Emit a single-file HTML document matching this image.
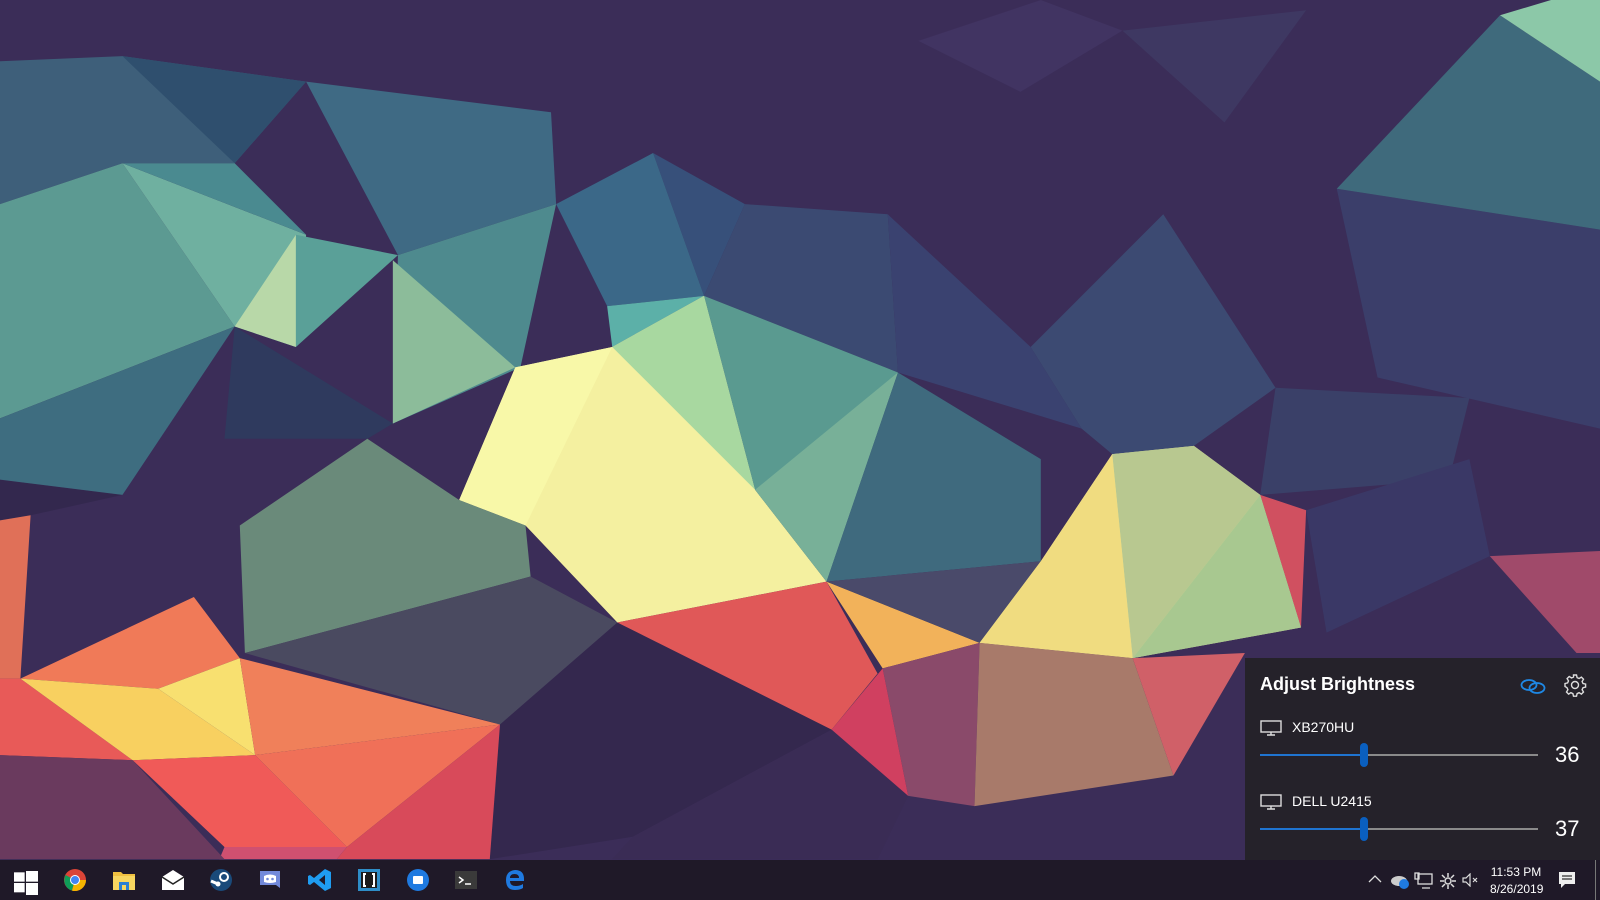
<!DOCTYPE html>
<html><head><meta charset="utf-8"><style>
html,body{margin:0;padding:0;width:1600px;height:900px;overflow:hidden;background:#3b2d58;font-family:"Liberation Sans",sans-serif}
#bg{position:absolute;left:0;top:0;width:1600px;height:900px}
#tb{position:absolute;left:0;top:860px;width:1600px;height:40px;background:rgba(30,25,38,0.96)}
.ic{position:absolute;top:8px;width:24px;height:24px}
#fly{position:absolute;left:1245px;top:658px;width:355px;height:202px;background:rgba(36,34,40,0.95);color:#fff}
.t{position:absolute;white-space:nowrap}
.track{position:absolute;left:15px;width:278px;height:2px;background:#8a8a8a}
.fill{position:absolute;left:0;top:0;height:2px;width:104px;background:#1f74d0}
.thumb{position:absolute;left:100px;top:-11px;width:8px;height:24px;border-radius:4px;background:#0a5fbf}
</style></head><body>
<svg id="bg" viewBox="0 0 1568 882" preserveAspectRatio="none">
<rect width="1568" height="882" fill="#3b2d58"/>
<polygon points="640,150 730,200 690,290" fill="#37507a"/>
<polygon points="730,200 870,210 880,365 690,290" fill="#3b4a72"/>
<polygon points="870,210 1010,340 1060,420 880,365" fill="#3a4270"/>
<polygon points="1010,340 1140,210 1250,380 1170,437 1090,445 1060,420" fill="#3c4a72"/>
<polygon points="1250,380 1440,390 1420,470 1235,485" fill="#3a4068"/>
<polygon points="1310,185 1568,225 1568,420 1350,370" fill="#3b3e6a"/>
<polygon points="1280,500 1440,450 1460,545 1300,620" fill="#3a3866"/>
<polygon points="900,40 1020,0 1100,30 1000,90" fill="#413462"/>
<polygon points="1100,30 1280,10 1200,120" fill="#3e3862"/>
<polygon points="0,470 120,485 30,505 0,510" fill="#33284e"/>
<polygon points="490,710 605,610 815,715 620,820 480,842" fill="#34284e"/>
<polygon points="620,820 815,715 890,780 860,842 600,842" fill="#3a2c55"/>
<polygon points="0,60 120,55 300,80 230,160 120,160 0,200" fill="#3e5f7a"/>
<polygon points="120,55 230,160 300,80" fill="#2f4f6e"/>
<polygon points="300,80 540,110 545,200 390,250" fill="#3f6a84"/>
<polygon points="0,200 120,160 230,320 0,410" fill="#5c9a92"/>
<polygon points="120,160 300,230 290,340 230,320" fill="#6fb0a0"/>
<polygon points="120,160 230,160 300,230" fill="#4a8a90"/>
<polygon points="230,320 290,230 290,340" fill="#b8d8a8"/>
<polygon points="290,230 390,250 290,340" fill="#5aa098"/>
<polygon points="390,250 545,200 510,360 385,415" fill="#4e8a8e"/>
<polygon points="385,255 505,360 385,415" fill="#8cbc9a"/>
<polygon points="0,410 230,320 120,485 0,470" fill="#3e6d80"/>
<polygon points="230,320 385,415 360,430 220,430" fill="#2f3a5e"/>
<polygon points="545,200 640,150 690,290 595,300" fill="#3b6888"/>
<polygon points="595,300 690,290 600,340" fill="#5cb0a8"/>
<polygon points="505,360 600,340 690,290 740,480 810,570 605,610 515,515 450,490" fill="#f4f0a0"/>
<polygon points="600,340 690,290 740,480" fill="#a8d8a0"/>
<polygon points="505,360 600,340 515,515 450,490" fill="#f8f8a8"/>
<polygon points="690,290 880,365 810,570 740,480" fill="#5a9a90"/>
<polygon points="740,480 880,365 810,570" fill="#78b098"/>
<polygon points="880,365 1020,450 1020,550 810,570" fill="#3f6a7e"/>
<polygon points="360,430 450,490 515,515 520,565 240,640 235,515" fill="#6a8a7a"/>
<polygon points="520,565 605,610 490,710 240,640" fill="#4a4a60"/>
<polygon points="605,610 810,570 860,660 815,715" fill="#e05858"/>
<polygon points="810,570 960,630 865,655" fill="#f2b25a"/>
<polygon points="810,570 1020,550 960,630" fill="#4a4a6a"/>
<polygon points="1020,550 1090,445 1170,437 1235,485 1275,615 1110,645 960,630" fill="#d8d890"/>
<polygon points="1090,445 1170,437 1235,485 1110,645" fill="#b8c890"/>
<polygon points="1020,550 1090,445 1110,645 960,630" fill="#f0dc80"/>
<polygon points="1235,485 1280,500 1275,615" fill="#d05060"/>
<polygon points="1110,645 1235,485 1275,615" fill="#a8c890"/>
<polygon points="865,655 960,630 955,790 890,780" fill="#8a4a6a"/>
<polygon points="960,630 1110,645 1150,760 955,790" fill="#a87a6a"/>
<polygon points="1110,645 1220,640 1150,760" fill="#d06068"/>
<polygon points="815,715 865,655 890,780" fill="#d04060"/>
<polygon points="1310,185 1470,15 1568,80 1568,225" fill="#3f6a7c"/>
<polygon points="1470,15 1520,0 1568,0 1568,80" fill="#8cc8a8"/>
<polygon points="1460,545 1568,540 1568,640 1545,640" fill="#a04a6a"/>
<polygon points="0,510 30,505 20,665 0,665" fill="#e07058"/>
<polygon points="20,665 190,585 235,645 155,675" fill="#f07a58"/>
<polygon points="0,665 20,665 130,745 0,740" fill="#e85a58"/>
<polygon points="20,665 155,675 250,740 130,745" fill="#f8d060"/>
<polygon points="155,675 235,645 250,740" fill="#f8e070"/>
<polygon points="235,645 490,710 250,740" fill="#f0805a"/>
<polygon points="130,745 250,740 340,830 220,830" fill="#f05a58"/>
<polygon points="250,740 490,710 340,830" fill="#f07058"/>
<polygon points="340,830 490,710 480,842 330,842" fill="#d84a5a"/>
<polygon points="220,830 340,830 330,842 215,842" fill="#d05070"/>
<polygon points="0,740 130,745 220,842 0,842" fill="#6a3a5e"/>
</svg>

<div id="fly">
<div class="t" style="left:15px;top:16px;font-size:18px;font-weight:bold">Adjust Brightness</div>
<svg class="t" style="left:275px;top:18px" width="26" height="20" viewBox="0 0 26 20" fill="none" stroke="#1e88e5" stroke-width="1.8"><ellipse cx="9" cy="9" rx="7.5" ry="5"/><ellipse cx="17" cy="12" rx="7.5" ry="5"/></svg>
<svg class="t" style="left:318px;top:15px" width="24" height="24" viewBox="0 0 24 24" fill="none" stroke="#ddd" stroke-width="1.4"><circle cx="12" cy="12" r="3.5"/><path d="M10.5 2h3l.6 2.6 2 .9 2.3-1.4 2.1 2.1-1.4 2.3.9 2 2.6.6v3l-2.6.6-.9 2 1.4 2.3-2.1 2.1-2.3-1.4-2 .9-.6 2.6h-3l-.6-2.6-2-.9-2.3 1.4-2.1-2.1 1.4-2.3-.9-2L2 13.5v-3l2.6-.6.9-2-1.4-2.3 2.1-2.1 2.3 1.4 2-.9z"/></svg>
<svg class="t" style="left:15px;top:62px" width="22" height="16" viewBox="0 0 22 16" fill="none" stroke="#ddd" stroke-width="1.4"><rect x="1" y="1" width="20" height="11"/><path d="M7 15h8M11 12v3"/></svg>
<div class="t" style="left:47px;top:61px;font-size:14px">XB270HU</div>
<div class="track" style="top:96px"><div class="fill"></div><div class="thumb"></div></div>
<div class="t" style="left:310px;top:84px;font-size:22px">36</div>
<svg class="t" style="left:15px;top:136px" width="22" height="16" viewBox="0 0 22 16" fill="none" stroke="#ddd" stroke-width="1.4"><rect x="1" y="1" width="20" height="11"/><path d="M7 15h8M11 12v3"/></svg>
<div class="t" style="left:47px;top:135px;font-size:14px">DELL U2415</div>
<div class="track" style="top:170px"><div class="fill"></div><div class="thumb"></div></div>
<div class="t" style="left:310px;top:158px;font-size:22px">37</div>
</div>

<div id="tb">
<svg class="ic" style="left:14px;top:11px" width="18" height="18" viewBox="0 0 18 18" fill="#fff"><rect x="0" y="1" width="8" height="7"/><rect x="9" y="0" width="9" height="8"/><rect x="0" y="9" width="8" height="7"/><rect x="9" y="9" width="9" height="9"/></svg>
<svg class="ic" style="left:63px" viewBox="0 0 24 24"><circle cx="12" cy="12" r="11" fill="#db4437"/><path d="M12 12L2.5 7A11 11 0 0 0 9 22.6z" fill="#0f9d58"/><path d="M12 12L9 22.6A11 11 0 0 0 23 12z" fill="#f4b400"/><circle cx="12" cy="12" r="5" fill="#fff"/><circle cx="12" cy="12" r="4" fill="#4285f4"/></svg>
<svg class="ic" style="left:112px" viewBox="0 0 24 24"><path d="M1 4h8l2 2h12v16H1z" fill="#f0c040"/><rect x="1" y="8" width="22" height="14" fill="#f7d660"/><path d="M7 14h10v8h-3v-5h-4v5H7z" fill="#2a7fd4"/></svg>
<svg class="ic" style="left:161px" viewBox="0 0 24 24"><path d="M1 9l11-7 11 7v13H1z" fill="#fff"/><path d="M1 9l11 7 11-7" fill="none" stroke="#222" stroke-width="1.5"/></svg>
<svg class="ic" style="left:209px" viewBox="0 0 24 24"><circle cx="12" cy="12" r="11" fill="#1a4a7a"/><circle cx="15" cy="9" r="4" fill="none" stroke="#fff" stroke-width="2"/><path d="M2 13l7 3" stroke="#fff" stroke-width="3"/><circle cx="9" cy="16" r="2.5" fill="#fff"/></svg>
<svg class="ic" style="left:258px" viewBox="0 0 24 24"><path d="M2 3h20v17l-4-3H2z" fill="#7289da"/><path d="M6 8q6-3 12 0v6q-6 2-12 0z" fill="#fff"/><circle cx="9.5" cy="11" r="1.3" fill="#7289da"/><circle cx="14.5" cy="11" r="1.3" fill="#7289da"/></svg>
<svg class="ic" style="left:308px" viewBox="0 0 24 24"><path d="M17 1l6 3v16l-6 3-11-9-4 3-2-1V8l2-1 4 3zM17 7l-6 5 6 5z" fill="#1f9cf0"/></svg>
<svg class="ic" style="left:357px" viewBox="0 0 24 24"><rect x="1" y="1" width="22" height="22" fill="#2e8dc8"/><rect x="4" y="4" width="16" height="16" fill="#1b1b1b"/><path d="M9 6H7v12h2M15 6h2v12h-2" stroke="#fff" stroke-width="2" fill="none"/></svg>
<svg class="ic" style="left:406px" viewBox="0 0 24 24"><circle cx="12" cy="12" r="11" fill="#1f7ae0"/><rect x="7" y="8" width="10" height="8" rx="1" fill="#fff"/></svg>
<svg class="ic" style="left:454px" viewBox="0 0 24 24"><rect x="1" y="3" width="22" height="18" fill="#3a3a3a"/><path d="M5 9l4 3-4 3" stroke="#fff" stroke-width="1.5" fill="none"/><path d="M11 16h6" stroke="#fff" stroke-width="1.5"/></svg>
<svg class="ic" style="left:503px" viewBox="0 0 24 24"><path d="M21 13H7q0 5 6 5 4 0 7-2v4q-3 2-8 2-9 0-9-10 0-9 9-10 9 0 9 9zM7 10h9q0-4-4.5-4T7 10z" fill="#1f7ae0"/></svg>
<svg class="t" style="left:1368px;top:14px" width="14" height="10" viewBox="0 0 14 10" fill="none" stroke="#ddd" stroke-width="1.3"><path d="M1 8l6-6 6 6"/></svg>
<svg class="t" style="left:1390px;top:13px" width="20" height="16" viewBox="0 0 20 16"><ellipse cx="9" cy="8" rx="8" ry="5" fill="#ccc"/><circle cx="14" cy="11" r="5" fill="#1f7ae0"/></svg>
<svg class="t" style="left:1414px;top:12px" width="20" height="18" viewBox="0 0 20 18" fill="none" stroke="#ddd" stroke-width="1.3"><rect x="4" y="2" width="14" height="10"/><path d="M8 16h8M1 1h4v6H1z"/></svg>
<svg class="t" style="left:1439px;top:12px" width="18" height="18" viewBox="0 0 18 18" fill="none" stroke="#ddd" stroke-width="1.5"><circle cx="9" cy="9" r="3"/><path d="M9 1v4M9 13v4M1 9h4M13 9h4M3 3l3 3M12 12l3 3M3 15l3-3M12 6l3-3"/></svg>
<svg class="t" style="left:1462px;top:13px" width="18" height="14" viewBox="0 0 18 14" fill="none" stroke="#ddd" stroke-width="1.2"><path d="M1 5h3l4-4v12l-4-4H1z"/><path d="M11 5l4 4M15 5l-4 4"/></svg>
<div class="t" style="left:1490px;top:4px;width:52px;text-align:center;color:#fff;font-size:12px;line-height:17px">11:53 PM<br>8/26/2019</div>
<svg class="t" style="left:1558px;top:11px" width="18" height="18" viewBox="0 0 18 18"><path d="M1 1h16v12H7l-4 4v-4H1z" fill="#eee"/><path d="M4 5h10M4 8h10" stroke="#333" stroke-width="1.2"/></svg>
<div class="t" style="left:1595px;top:0;width:1px;height:40px;background:#777"></div>
</div>
</body></html>
